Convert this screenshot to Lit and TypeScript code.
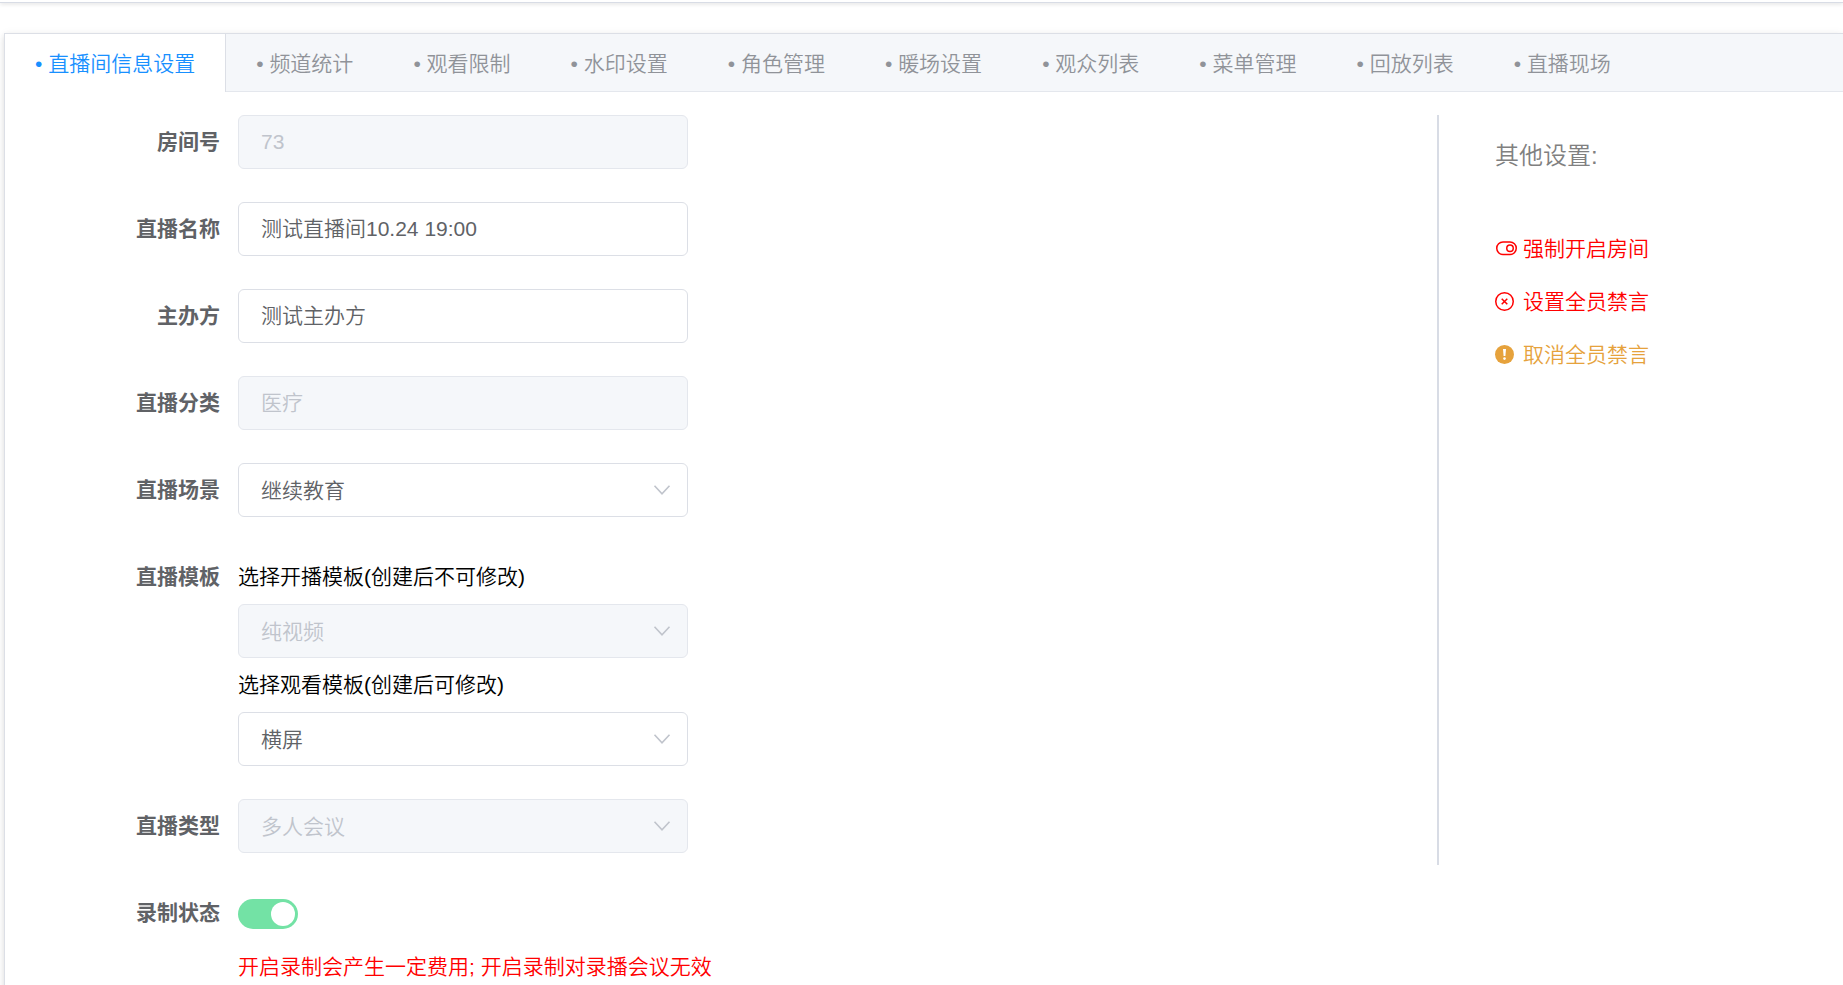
import { LitElement, html, css, svg } from "lit";
import { customElement, property, state } from "lit/decorators.js";
import { classMap } from "lit/directives/class-map.js";

const TABS = [
  "直播间信息设置",
  "频道统计",
  "观看限制",
  "水印设置",
  "角色管理",
  "暖场设置",
  "观众列表",
  "菜单管理",
  "回放列表",
  "直播现场",
];

const ICONS = {
  open: svg`<rect x="1.75" y="4" width="19.5" height="12.5" rx="6.25"/><circle cx="15" cy="10.25" r="3.25"/>`,
  close: svg`<circle cx="9.5" cy="10.5" r="8.75"/><path d="M6.7 7.7l5.6 5.6M12.3 7.7l-5.6 5.6"/>`,
  warning: svg`<circle cx="9.5" cy="10.5" r="9.5" fill="currentColor" stroke="none"/><path d="M8 5h3l-.6 7H8.6z" fill="#fff" stroke="none"/><circle cx="9.5" cy="14.6" r="1.3" fill="#fff" stroke="none"/>`,
};

const ACTIONS: { text: string; icon: keyof typeof ICONS; tone: string }[] = [
  { text: "强制开启房间", icon: "open", tone: "danger" },
  { text: "设置全员禁言", icon: "close", tone: "danger" },
  { text: "取消全员禁言", icon: "warning", tone: "warning" },
];

@customElement("select-box")
class SelectBox extends LitElement {
  @property() value = "";
  @property() label = "";
  @property({ type: Boolean }) disabled = false;

  static styles = css`
    :host {
      display: block;
      max-width: 450px;
    }
    .box {
      display: grid;
      align-items: center;
    }
    select {
      grid-area: 1 / 1;
      appearance: none;
      box-sizing: border-box;
      width: 100%;
      height: 54px;
      margin: 0;
      padding: 0 48px 4px 22px;
      border: 1px solid #dcdfe6;
      border-radius: 6px;
      background: #fff;
      color: #606266;
      font: inherit;
      outline: none;
    }
    select:disabled {
      background: #f5f7fa;
      border-color: #e4e7ed;
      color: #c0c4cc;
      opacity: 1;
    }
    svg {
      grid-area: 1 / 1;
      justify-self: end;
      margin-right: 17px;
      pointer-events: none;
      fill: none;
      stroke: #c0c4cc;
      stroke-width: 1.6;
    }
  `;

  render() {
    return html`<div class="box">
      <select aria-label=${this.label} ?disabled=${this.disabled}>
        <option selected>${this.value}</option>
      </select>
      <svg width="18" height="12" viewBox="0 0 18 12"><path d="M1.5 1.8L9 9.8l7.5-8" /></svg>
    </div>`;
  }
}

@customElement("app-root")
class AppRoot extends LitElement {
  @state() private active = 0;

  static styles = css`
    :host {
      display: flex;
      flex-direction: column;
      box-sizing: border-box;
      height: 100vh;
      overflow: hidden;
      background: #fff;
      color: #000;
      font: 350 21px "Liberation Sans", "Noto Sans CJK SC", sans-serif;
    }
    .topbar {
      flex: none;
      height: 2px;
      border-bottom: 1px solid #d8dce5;
      box-shadow: 0 1px 4px rgba(0, 0, 0, 0.14);
    }
    .card {
      flex: 1 0 auto;
      margin: 30px 0 0 4px;
      border: 1px solid #dcdfe6;
      border-width: 1px 0 0 1px;
      background: #fff;
      box-shadow: 0 3px 6px rgba(0, 0, 0, 0.12), 0 0 9px rgba(0, 0, 0, 0.04);
    }
    .tabs {
      display: flex;
      height: 57px;
      background: #f5f7fa;
      border-bottom: 1px solid #e4e7ed;
    }
    .tab {
      flex: none;
      height: 58px;
      padding: 0 30px 2px;
      border: 0;
      background: none;
      color: #909399;
      font: inherit;
      white-space: nowrap;
      cursor: pointer;
    }
    .tab.active {
      background: #fff;
      border-right: 1px solid #dcdfe6;
      color: #1890ff;
    }
    .content {
      display: flex;
      align-items: flex-start;
      padding: 23px 0 0 23px;
    }
    form {
      flex: 1;
      min-width: 0;
      display: flex;
      flex-direction: column;
      gap: 33px;
    }
    .row {
      display: grid;
      grid-template-columns: 192px minmax(0, 1fr);
      column-gap: 18px;
      line-height: 54px;
    }
    .label {
      color: #606266;
      font-weight: 700;
      text-align: right;
    }
    .text {
      box-sizing: border-box;
      width: 100%;
      max-width: 450px;
      height: 54px;
      margin: 0;
      padding: 0 22px;
      border: 1px solid #dcdfe6;
      border-radius: 6px;
      background: #fff;
      color: #606266;
      font: inherit;
      outline: none;
      display: block;
    }
    .text:disabled {
      background: #f5f7fa;
      border-color: #e4e7ed;
      color: #c0c4cc;
    }
    .line {
      display: flex;
      align-items: center;
      height: 54px;
    }
    .switch {
      appearance: none;
      display: flex;
      align-items: center;
      justify-content: flex-start;
      box-sizing: border-box;
      width: 60px;
      height: 30px;
      margin: 2px 0 0;
      padding: 0 3px;
      border-radius: 15px;
      background: #dcdfe6;
      cursor: pointer;
    }
    .switch:checked {
      justify-content: flex-end;
      background: #73e2a5;
    }
    .switch::before {
      content: "";
      width: 24px;
      height: 24px;
      border-radius: 50%;
      background: #fff;
    }
    .hint {
      color: #f00;
    }
    aside {
      flex: none;
      box-sizing: border-box;
      width: 406px;
      min-height: 750px;
      padding: 25px 0 0 56px;
      border-left: 2px solid #d8dce5;
    }
    h2 {
      margin: 0 0 61px;
      color: #808080;
      font-size: 24px;
      font-weight: inherit;
      line-height: 32px;
    }
    .actions {
      display: flex;
      flex-direction: column;
      align-items: flex-start;
      gap: 21px;
    }
    .action {
      display: flex;
      align-items: center;
      gap: 6px;
      padding: 0;
      border: 0;
      background: none;
      font: inherit;
      line-height: 32px;
      cursor: pointer;
    }
    .action svg {
      width: 22px;
      height: 21px;
      margin-bottom: 2px;
      fill: none;
      stroke: currentColor;
      stroke-width: 1.5;
    }
    .danger {
      color: #f00;
    }
    .warning {
      color: #e6a23c;
    }
  `;

  private input(id: string, label: string, value: string, disabled = false) {
    return html`<div class="row">
      <label class="label" for=${id}>${label}</label>
      <input class="text" id=${id} type="text" .value=${value} ?disabled=${disabled} />
    </div>`;
  }

  render() {
    return html`
      <header class="topbar"></header>
      <main class="card">
        <div class="tabs" role="tablist">
          ${TABS.map(
            (name, i) => html`<button
              class=${classMap({ tab: true, active: i === this.active })}
              role="tab"
              aria-selected=${i === this.active}
              @click=${() => (this.active = i)}
            >• ${name}</button>`
          )}
        </div>
        <div class="content">
          <form>
            ${this.input("room", "房间号", "73", true)}
            ${this.input("name", "直播名称", "测试直播间10.24 19:00")}
            ${this.input("host", "主办方", "测试主办方")}
            ${this.input("category", "直播分类", "医疗", true)}
            <div class="row">
              <span class="label">直播场景</span>
              <select-box label="直播场景" value="继续教育"></select-box>
            </div>
            <div class="row">
              <span class="label">直播模板</span>
              <div>
                <div class="line">选择开播模板(创建后不可修改)</div>
                <select-box label="选择开播模板" value="纯视频" disabled></select-box>
                <div class="line">选择观看模板(创建后可修改)</div>
                <select-box label="选择观看模板" value="横屏"></select-box>
              </div>
            </div>
            <div class="row">
              <span class="label">直播类型</span>
              <select-box label="直播类型" value="多人会议" disabled></select-box>
            </div>
            <div class="row">
              <label class="label" for="record">录制状态</label>
              <div>
                <div class="line">
                  <input class="switch" id="record" type="checkbox" role="switch" checked />
                </div>
                <div class="line hint">开启录制会产生一定费用; 开启录制对录播会议无效</div>
              </div>
            </div>
          </form>
          <aside>
            <h2>其他设置:</h2>
            <div class="actions">
              ${ACTIONS.map(
                (a) => html`<button class="action ${a.tone}" type="button">
                  <svg viewBox="0 0 22 21" aria-hidden="true">${ICONS[a.icon]}</svg>${a.text}
                </button>`
              )}
            </div>
          </aside>
        </div>
      </main>
    `;
  }
}
